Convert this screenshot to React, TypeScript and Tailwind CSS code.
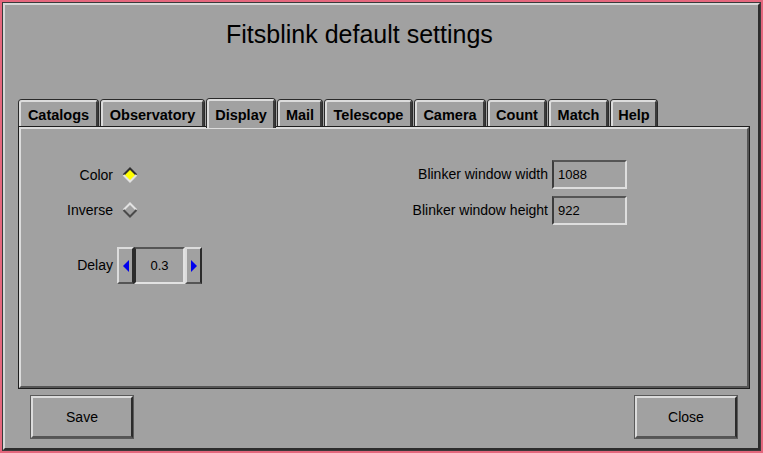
import React from 'react';

const tabs = [
  { label: 'Catalogs', w: 'w-[81px]' },
  { label: 'Observatory', w: 'w-[105px]' },
  { label: 'Display', w: 'w-[70px]', active: true },
  { label: 'Mail', w: 'w-[46px]' },
  { label: 'Telescope', w: 'w-[89px]' },
  { label: 'Camera', w: 'w-[72px]' },
  { label: 'Count', w: 'w-[60px]' },
  { label: 'Match', w: 'w-[61px]' },
  { label: 'Help', w: 'w-[48px]' },
];

const Diamond: React.FC<{ on?: boolean }> = ({ on }) => (
  <svg width="16" height="16" viewBox="0 0 16 16">
    <polygon points="8,1 15,8 8,15 1,8" fill={on ? '#ffff00' : '#a1a1a1'} />
    <polyline points="1.5,8 8,1.5 14.5,8" fill="none" stroke={on ? '#2e2e2e' : '#e2e2e2'} strokeWidth="2" />
    <polyline points="1.5,8 8,14.5 14.5,8" fill="none" stroke={on ? '#e2e2e2' : '#4a4a4a'} strokeWidth="2" />
  </svg>
);

const Entry: React.FC<{ value: string }> = ({ value }) => (
  <div className="w-[75px] h-[29px] border-2 border-t-[#555555] border-l-[#3c3c3c] border-b-[#dedede] border-r-[#dedede] flex items-center pl-[4px] text-[13px]">
    {value}
  </div>
);

const Button: React.FC<{ label: string }> = ({ label }) => (
  <div className="w-[104px] h-[44px] border border-[#5a5a5a]">
    <div className="w-full h-full border-2 border-t-[#dcdcdc] border-l-[#dcdcdc] border-r-[#2b2b2b] border-b-[#555555] flex items-center justify-center text-[14px]">
      {label}
    </div>
  </div>
);

const ArrowButton: React.FC<{ dir: 'left' | 'right' }> = ({ dir }) => (
  <div className="w-[17px] h-full border-2 border-t-[#dcdcdc] border-l-[#dcdcdc] border-r-[#2b2b2b] border-b-[#555555] flex items-center justify-center">
    <svg width="6" height="12" viewBox="0 0 6 12">
      {dir === 'left' ? (
        <polygon points="6,0 0,6 6,12" fill="#0000ee" />
      ) : (
        <polygon points="0,0 6,6 0,12" fill="#0000ee" />
      )}
    </svg>
  </div>
);

export default function App() {
  return (
    <div
      className="w-[763px] h-[453px] bg-[#e5677d] p-[2px] text-black"
      style={{ fontFamily: '"Liberation Sans", Arial, sans-serif' }}
    >
      <div className="w-full h-full border border-[#3a3a3a]">
        <div className="w-full h-full border-2 border-t-[#d8d8d8] border-l-[#d8d8d8] border-r-[#2c2c2c] border-b-[#2c2c2c] bg-[#a1a1a1] flex flex-col pl-[13px] pr-[8px]">
          {/* Title */}
          <div className="h-[93px] pt-[14px] pl-[208px]">
            <div className="text-[25px] leading-[30px]">Fitsblink default settings</div>
          </div>

          {/* Tabs */}
          <div className="flex items-end gap-[1px] h-[28px] relative z-10">
            {tabs.map((t) => (
              <div
                key={t.label}
                className={`${t.w} ${t.active ? 'h-[30px] -mb-[2px]' : 'h-[27px]'} border border-b-0 border-[#2a2a2a] rounded-t-[4px] bg-[#a1a1a1]`}
              >
                <div
                  className={`w-full h-full border-t-2 border-l-2 border-r-2 border-t-[#dcdcdc] border-l-[#dcdcdc] border-r-[#3a3a3a] rounded-t-[3px] flex items-center justify-center font-bold text-[14.5px] ${t.active ? 'pt-[3px]' : 'pt-[4px]'}`}
                >
                  {t.label}
                </div>
              </div>
            ))}
          </div>

          {/* Panel */}
          <div className="h-[263px] border border-[#1e1e1e]">
            <div className="w-full h-full border-2 border-t-[#dcdcdc] border-l-[#dcdcdc] border-r-[#555555] border-b-[#555555] flex">
              {/* Left column */}
              <div className="w-[367px] pt-[34px] flex flex-col">
                <div className="flex items-center h-[24px]">
                  <div className="w-[92px] text-right text-[14px]">Color</div>
                  <div className="ml-[9px]"><Diamond on /></div>
                </div>
                <div className="flex items-center h-[24px] mt-[11px]">
                  <div className="w-[92px] text-right text-[14px]">Inverse</div>
                  <div className="ml-[9px]"><Diamond /></div>
                </div>
                <div className="flex items-center h-[37px] mt-[25px]">
                  <div className="w-[92px] text-right text-[14px]">Delay</div>
                  <div className="ml-[4px] h-[37px] flex">
                    <ArrowButton dir="left" />
                    <div className="w-[51px] h-full border-2 border-t-[#555555] border-l-[#2b2b2b] border-b-[#e2e2e2] border-r-[#e2e2e2] flex items-center justify-center text-[13px]">
                      0.3
                    </div>
                    <ArrowButton dir="right" />
                  </div>
                </div>
              </div>

              {/* Right column */}
              <div className="pt-[31px] flex flex-col gap-[7px]">
                <div className="flex items-center">
                  <div className="w-[164px] text-right text-[14px] pr-[4px]">Blinker window width</div>
                  <Entry value="1088" />
                </div>
                <div className="flex items-center">
                  <div className="w-[164px] text-right text-[14px] pr-[4px]">Blinker window height</div>
                  <Entry value="922" />
                </div>
              </div>
            </div>
          </div>

          {/* Buttons */}
          <div className="flex justify-between mt-[6px] mx-[12px]">
            <Button label="Save" />
            <Button label="Close" />
          </div>
        </div>
      </div>
    </div>
  );
}
